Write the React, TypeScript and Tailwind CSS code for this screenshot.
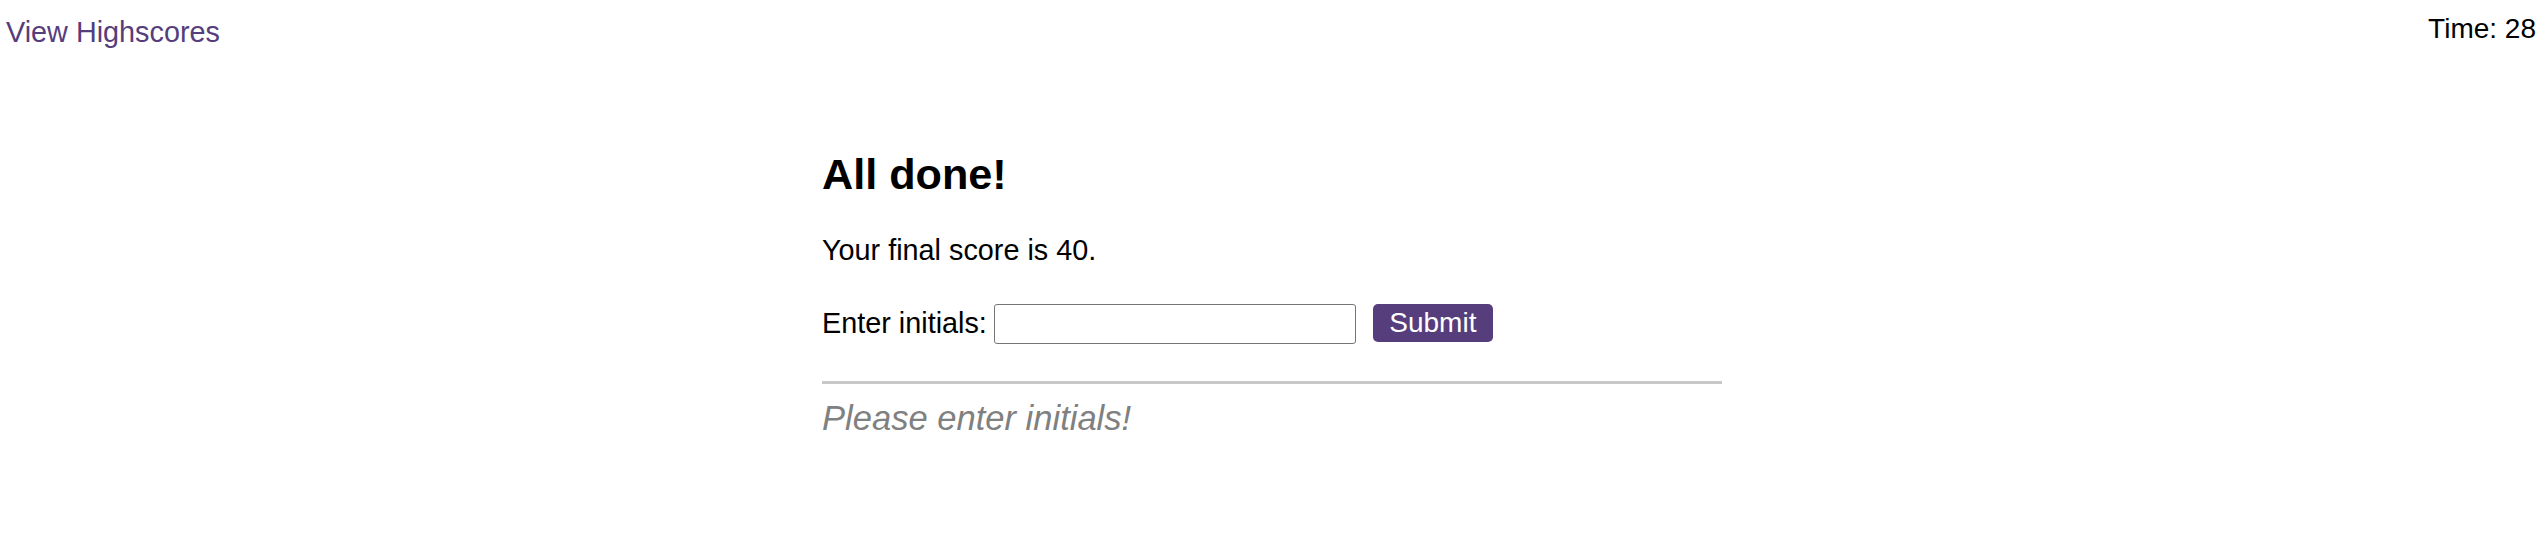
export default function App() {
  return (
    <div className="min-h-[558px] bg-white text-black font-['Liberation_Sans',Arial,sans-serif]">
      <header className="flex items-start justify-between">
        <a href="#" className="ml-[6px] pt-[16px] text-[28.8px] leading-[33px] text-[#563d7c]">
          View Highscores
        </a>
        <div className="mr-[11px] pt-[13px] text-[28px] leading-[32px]">Time: 28</div>
      </header>

      <div className="pr-[3px]">
        <main className="mx-auto mt-[100px] w-[900px]">
          <h2 className="text-[43.2px] font-bold leading-[50px]">All done!</h2>
          <p className="mt-[35px] text-[28.8px] leading-[33px]">Your final score is 40.</p>

          <div className="mt-[37px] flex items-start text-[28.8px]">
            <label className="pt-[3px] leading-[33px]">Enter initials:</label>
            <input
              type="text"
              className="ml-[7px] h-[40px] w-[362px] rounded-[3px] border border-[#767676] px-2 text-[24px]"
            />
            <button className="ml-[17px] h-[38px] w-[120px] rounded-[5px] bg-[#563d7c] text-[28px] leading-[32px] text-white">
              Submit
            </button>
          </div>

          <hr className="mt-[37px] border-t-[3px] border-[#c8c8c8]" />
          <p className="mt-[14px] text-[34.56px] italic leading-[40px] text-[#808080]">Please enter initials!</p>
        </main>
      </div>
    </div>
  );
}
